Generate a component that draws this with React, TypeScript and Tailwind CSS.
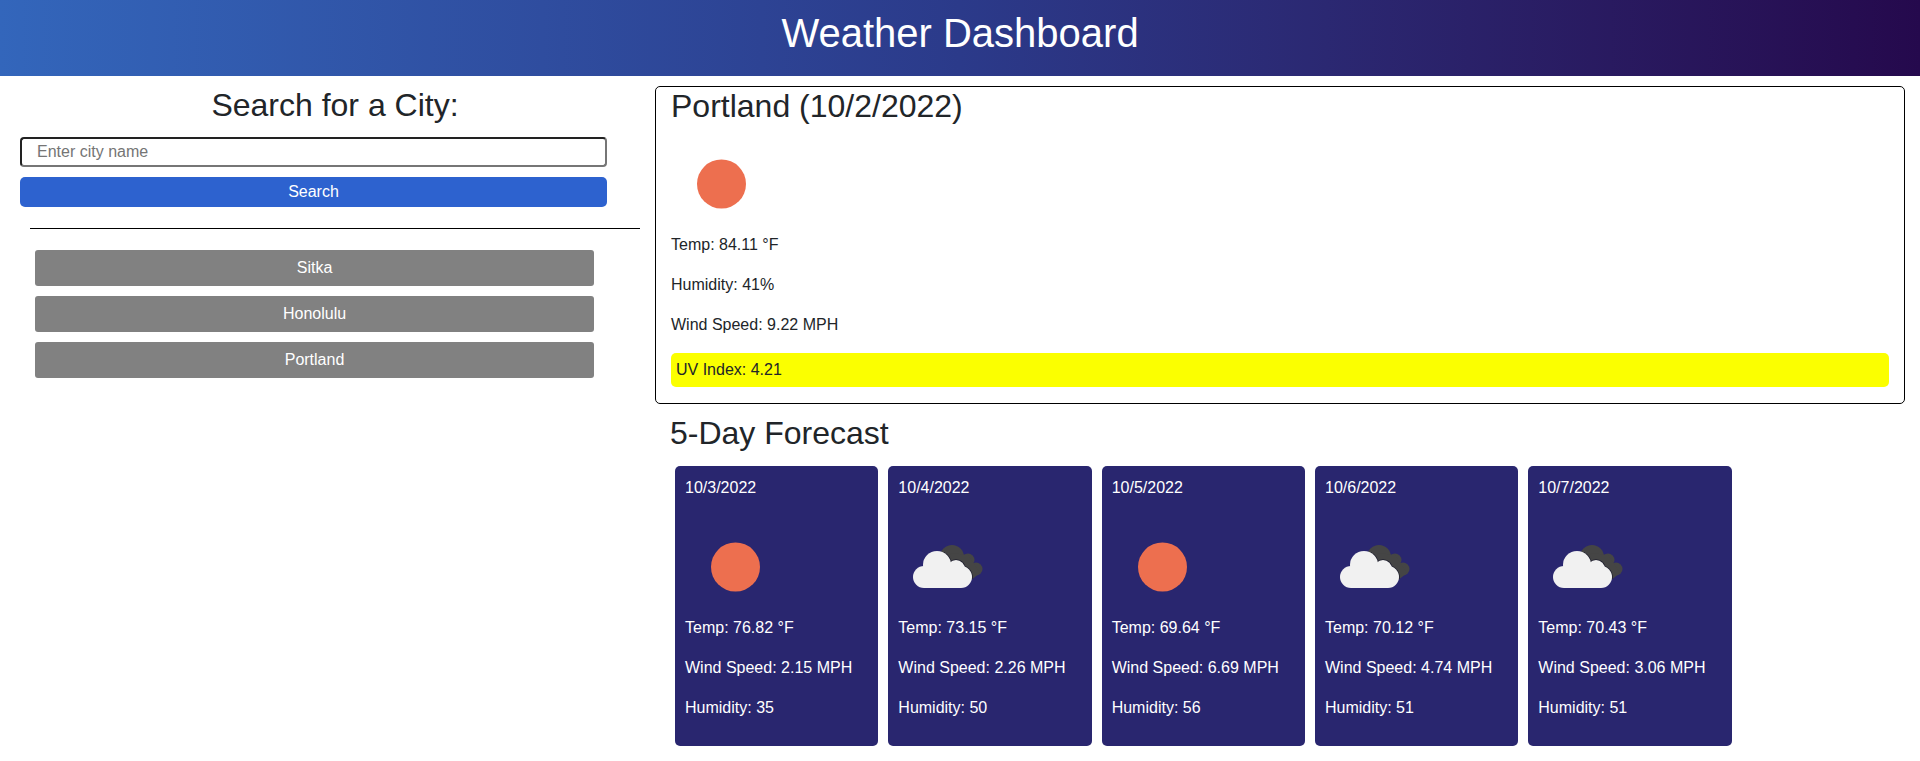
const forecast = [
  { date: '10/3/2022', icon: 'sun', temp: '76.82', wind: '2.15', humidity: '35' },
  { date: '10/4/2022', icon: 'cloud', temp: '73.15', wind: '2.26', humidity: '50' },
  { date: '10/5/2022', icon: 'sun', temp: '69.64', wind: '6.69', humidity: '56' },
  { date: '10/6/2022', icon: 'cloud', temp: '70.12', wind: '4.74', humidity: '51' },
  { date: '10/7/2022', icon: 'cloud', temp: '70.43', wind: '3.06', humidity: '51' },
];

const cities = ['Sitka', 'Honolulu', 'Portland'];

function SunIcon() {
  return (
    <svg viewBox="0 0 100 100" className="block h-[100px] w-[100px]">
      <circle cx="50.5" cy="50" r="24.5" fill="#ed6f4f" />
    </svg>
  );
}

function CloudShape() {
  return (
    <>
      <circle cx="39" cy="48" r="14" />
      <circle cx="58" cy="52" r="9" />
      <rect x="15" y="49" width="59" height="22" rx="11" />
    </>
  );
}

function CloudIcon() {
  return (
    <svg viewBox="0 0 100 100" className="block h-[100px] w-[100px]">
      <defs>
        <clipPath id="cloud-edge">
          <rect x="46" y="28" width="40" height="34" />
        </clipPath>
      </defs>
      <g fill="#454545">
        <circle cx="54" cy="40" r="12" />
        <circle cx="70" cy="43" r="6.5" />
        <circle cx="78" cy="52" r="6.5" />
        <path d="M52 36 L70 38 L82 56 L72 64 L56 52 Z" />
      </g>
      <g fill="#1d1d2c" stroke="#1d1d2c" strokeWidth="1.5" clipPath="url(#cloud-edge)">
        <CloudShape />
      </g>
      <g fill="#f1f1f1">
        <CloudShape />
      </g>
    </svg>
  );
}

export default function App() {
  return (
    <div className="min-h-screen bg-white font-['Liberation_Sans',Arial,sans-serif] text-base text-[#212529]">
      <header className="flex h-[76px] items-start justify-center bg-gradient-to-r from-[#3366bb] via-[#2b3a8a] to-[#25094d] pt-[9px]">
        <h1 className="text-[40px] leading-[48px] text-white">Weather Dashboard</h1>
      </header>

      <div className="flex">
        {/* Search column */}
        <aside className="w-[655px] shrink-0 pl-5 pt-[10px]">
          <h2 className="ml-[10px] w-[610px] text-center text-[32px] leading-[38px]">Search for a City:</h2>
          <input
            type="text"
            placeholder="Enter city name"
            className="mt-[13px] block h-[30px] w-[587px] rounded-[4px] border-2 border-[#767676] border-t-[#222222] border-l-[#222222] pl-[15px] text-base outline-none placeholder:text-[#757575]"
          />
          <button className="mt-[10px] block h-[30px] w-[587px] rounded-[5px] bg-[#2d62cf] text-center text-white">
            Search
          </button>
          <hr className="ml-[10px] mt-[21px] w-[610px] border-t border-black" />
          <div className="ml-[15px] mt-[21px] flex w-[559px] flex-col gap-[10px]">
            {cities.map((city) => (
              <button key={city} className="h-[36px] rounded-[3px] bg-[#818181] text-center text-white">
                {city}
              </button>
            ))}
          </div>
        </aside>

        {/* Weather column */}
        <main className="min-w-0 flex-1 pr-[15px] pt-[10px]">
          <section className="h-[318px] rounded-[5px] border border-black px-[15px]">
            <h2 className="text-[32px] leading-[38px]">Portland (10/2/2022)</h2>
            <div className="mt-[9px] h-[99px]">
              <SunIcon />
            </div>
            <p className="h-[24px] leading-6">Temp: 84.11 °F</p>
            <p className="mt-4 h-[24px] leading-6">Humidity: 41%</p>
            <p className="mt-4 h-[24px] leading-6">Wind Speed: 9.22 MPH</p>
            <p className="mt-[16px] h-[34px] rounded-[5px] bg-[#fbff00] pl-[5px] leading-[34px]">UV Index: 4.21</p>
          </section>

          <h2 className="ml-[15px] mt-[10px] text-[32px] leading-[38px]">5-Day Forecast</h2>
          <div className="ml-[20px] mt-[14px] flex gap-[10px]">
            {forecast.map((day) => (
              <div key={day.date} className="h-[280px] w-[203.33px] rounded-[5px] bg-[#29266f] px-[10px] pt-[10px] text-white">
                <p className="h-[24px] leading-6">{day.date}</p>
                <div className="mt-[17px] h-[99px]">
                  {day.icon === 'sun' ? <SunIcon /> : <CloudIcon />}
                </div>
                <p className="h-[24px] leading-6">Temp: {day.temp} °F</p>
                <p className="mt-4 h-[24px] leading-6">Wind Speed: {day.wind} MPH</p>
                <p className="mt-4 h-[24px] leading-6">Humidity: {day.humidity}</p>
              </div>
            ))}
          </div>
        </main>
      </div>
    </div>
  );
}
